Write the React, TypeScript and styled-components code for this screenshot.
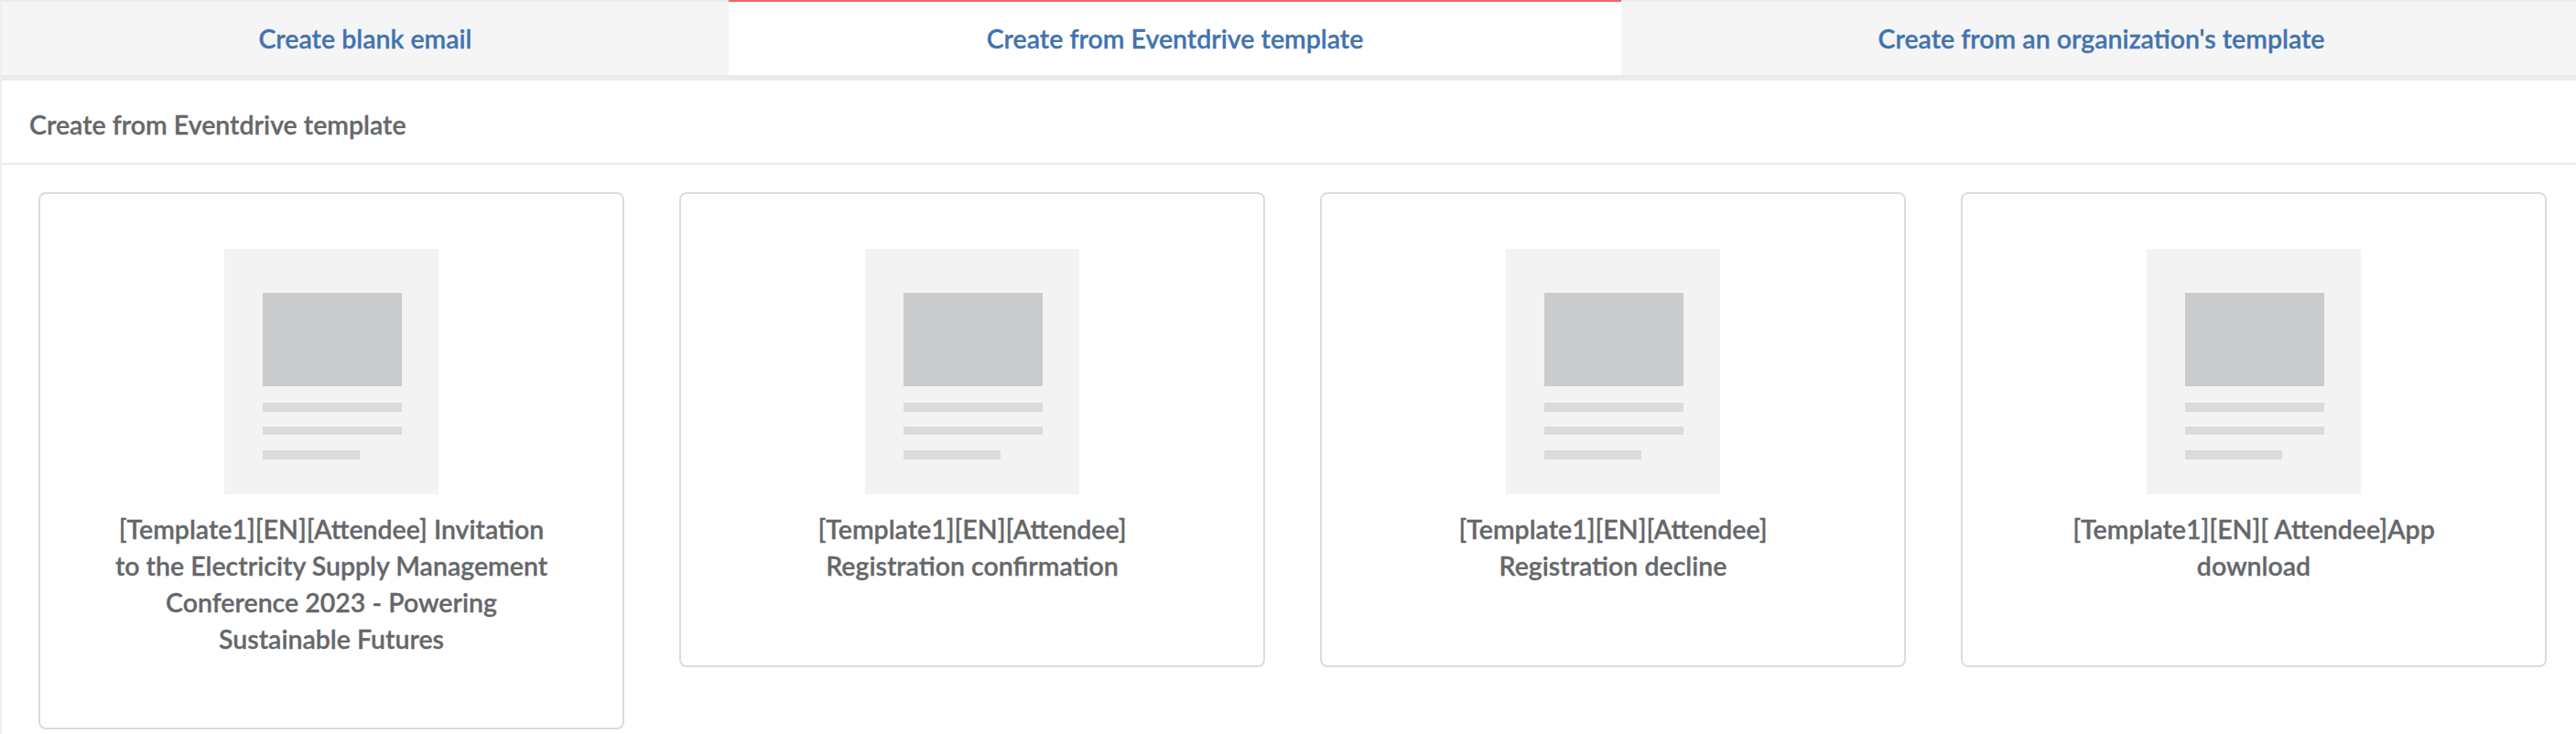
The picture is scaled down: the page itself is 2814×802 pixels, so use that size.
import React from 'react'
import styled, {createGlobalStyle} from 'styled-components'

const GlobalStyle = createGlobalStyle`
    html, body {
        margin: 0;
        padding: 0;
        background: #fff;
        overflow: hidden;
    }
    body {
        font-family: 'Lato', 'Liberation Sans', sans-serif;
        font-weight: 600;
        font-size: 28.5px;
        -webkit-text-stroke: 0.3px currentColor;
    }
`

const Page = styled.div`
    width: 2814px;
    height: 802px;
    overflow: hidden;
    box-sizing: border-box;
    border-left: 2px solid #eeeeee;
`

const TabBar = styled.div`
    display: grid;
    grid-template-columns: 794px 975px 1049px;
    border-bottom: 6px solid #e9eaeb;
`

const Tab = styled.div<{$active?: boolean}>`
    height: 80px;
    display: flex;
    align-items: center;
    justify-content: center;
    border-top: 2px solid ${(p) => (p.$active ? '#ee6666' : '#e9eaeb')};
    background: ${(p) => (p.$active ? '#ffffff' : '#f5f5f5')};
    color: #4173b0;
`

const PanelHeader = styled.div`
    height: 92px;
    box-sizing: border-box;
    padding: 5px 0 0 30px;
    display: flex;
    align-items: center;
    color: #65676a;
    border-bottom: 2px solid #e9eaeb;
`

const CardGrid = styled.div`
    display: grid;
    grid-template-columns: repeat(4, 640px);
    gap: 60px;
    align-items: start;
    padding: 30px 0 0 40px;
`

const Card = styled.div`
    box-sizing: border-box;
    min-height: 519px;
    padding: 60px 78px 77px;
    border: 2px solid #dcdcdc;
    border-radius: 8px;
    display: flex;
    flex-direction: column;
    align-items: center;
`

const Thumb = styled.svg`
    display: block;
    width: 234px;
    height: 268px;
    flex: none;
`

const CardTitle = styled.div`
    margin-top: 18px;
    width: 480px;
    text-align: center;
    line-height: 40px;
    color: #65676a;
`

const TemplateThumb = () => (
    <Thumb viewBox='0 0 234 268'>
        <rect width='234' height='268' fill='#f3f3f3' />
        <rect x='42' y='48' width='152' height='102' fill='#cacbcc' />
        <rect x='42' y='168' width='152' height='10' fill='#dadbdb' />
        <rect x='42' y='194' width='152' height='9' fill='#dadbdb' />
        <rect x='42' y='220' width='106' height='10' fill='#dadbdb' />
    </Thumb>
)

const templates = [
    '[Template1][EN][Attendee] Invitation to the Electricity Supply Management Conference 2023 - Powering Sustainable Futures',
    '[Template1][EN][Attendee] Registration confirmation',
    '[Template1][EN][Attendee] Registration decline',
    '[Template1][EN][ Attendee]App download',
]

const App = () => (
    <Page>
        <GlobalStyle />
        <TabBar>
            <Tab>Create blank email</Tab>
            <Tab $active>Create from Eventdrive template</Tab>
            <Tab>Create from an organization&apos;s template</Tab>
        </TabBar>
        <PanelHeader>Create from Eventdrive template</PanelHeader>
        <CardGrid>
            {templates.map((title) => (
                <Card key={title}>
                    <TemplateThumb />
                    <CardTitle>{title}</CardTitle>
                </Card>
            ))}
        </CardGrid>
    </Page>
)

export default App
